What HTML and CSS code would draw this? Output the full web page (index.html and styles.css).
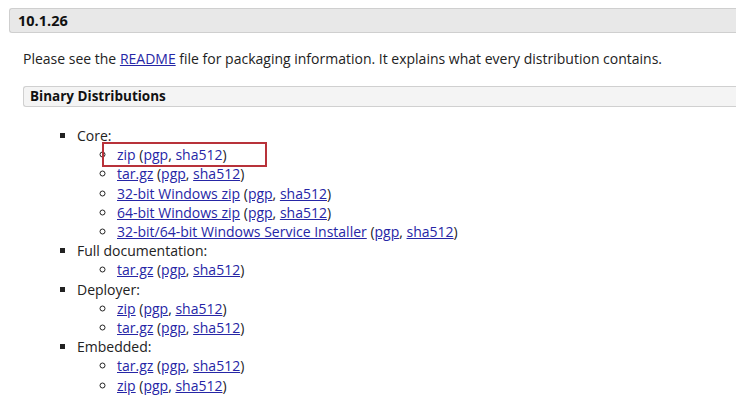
FILE: index.html
```html
<!DOCTYPE html>
<html>
<head>
<meta charset="utf-8">
<link rel="stylesheet" href="styles.css">
</head>
<body>
<div class="page">
  <h3 class="version">10.1.26</h3>
  <div class="section">
    <p class="intro">Please see the <a href="#">README</a> file for packaging information. It explains what every distribution contains.</p>
    <h4 class="sub">Binary Distributions</h4>
    <ul class="dist">
      <li>Core:
        <ul>
          <li class="hl"><a href="#" class="nou">zip</a> (<a href="#" class="nou">pgp</a>, <a href="#" class="nou">sha512</a>)<span class="box"></span></li>
          <li><a href="#">tar.gz</a> (<a href="#">pgp</a>, <a href="#">sha512</a>)</li>
          <li><a href="#">32-bit Windows zip</a> (<a href="#">pgp</a>, <a href="#">sha512</a>)</li>
          <li><a href="#">64-bit Windows zip</a> (<a href="#">pgp</a>, <a href="#">sha512</a>)</li>
          <li><a href="#">32-bit/64-bit Windows Service Installer</a> (<a href="#">pgp</a>, <a href="#">sha512</a>)</li>
        </ul>
      </li>
      <li>Full documentation:
        <ul>
          <li><a href="#">tar.gz</a> (<a href="#">pgp</a>, <a href="#">sha512</a>)</li>
        </ul>
      </li>
      <li>Deployer:
        <ul>
          <li><a href="#">zip</a> (<a href="#">pgp</a>, <a href="#">sha512</a>)</li>
          <li><a href="#">tar.gz</a> (<a href="#">pgp</a>, <a href="#">sha512</a>)</li>
        </ul>
      </li>
      <li>Embedded:
        <ul>
          <li><a href="#">tar.gz</a> (<a href="#">pgp</a>, <a href="#">sha512</a>)</li>
          <li><a href="#">zip</a> (<a href="#">pgp</a>, <a href="#">sha512</a>)</li>
        </ul>
      </li>
    </ul>
  </div>
</div>
</body>
</html>
```
FILE: styles.css
```css
html, body {
  margin: 0;
  padding: 0;
  background: #fff;
}
body {
  font-family: "Open Sans", "DejaVu Sans", sans-serif;
  font-size: 14px;
  color: #222;
  line-height: 19.2px;
}
.page {
  padding: 8px 0 0 9px;
}
.version {
  margin: 0;
  height: 23px;
  line-height: 23px;
  padding-left: 8px;
  font-size: 14.5px;
  font-weight: 700;
  color: #111;
  background: #e8e8e8;
  border: 1px solid #cfcfcf;
  border-right: none;
  border-radius: 3px 0 0 3px;
}
.section {
  padding-left: 14px;
}
.intro {
  margin: 16px 0 0 0;
  line-height: 19px;
}
a {
  color: #2626a6;
  text-decoration: underline;
}
a.nou {
  text-decoration: none;
}
.sub {
  margin: 18px 0 0 0;
  height: 19px;
  line-height: 19px;
  padding-left: 6px;
  font-size: 13.5px;
  font-weight: 700;
  color: #111;
  background: #f4f4f4;
  border: 1px solid #d0d0d0;
  border-right: none;
  border-radius: 3px 0 0 3px;
}
.dist {
  margin: 19px 0 0 0;
  padding-left: 54px;
  list-style: square;
}
.dist ul {
  margin: 0;
  padding-left: 40px;
  list-style: circle;
}
.hl {
  position: relative;
}
.box {
  position: absolute;
  left: -15px;
  top: -3px;
  width: 161px;
  height: 21px;
  border: 2px solid #b8323a;
  pointer-events: none;
}
```
